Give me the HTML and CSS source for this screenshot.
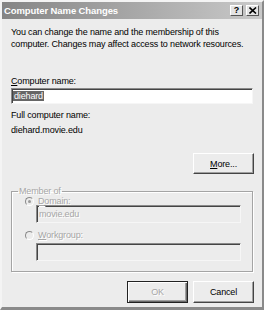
FILE: index.html
```html
<!DOCTYPE html>
<html lang="en">
<head>
  <meta charset="UTF-8" />
  <title>Computer Name Changes</title>
  <link rel="stylesheet" href="styles.css">
</head>
<body>
  <div class="dialog">
    <div class="titlebar">
      <span class="title">Computer Name Changes</span>
      <div class="caption-btns">
        <span class="cbtn help">?</span>
        <span class="cbtn close">
          <svg width="8" height="7" viewBox="0 0 8 7"><path d="M0.5 0.5 L7 6.5 M7 0.5 L0.5 6.5" stroke="#000" stroke-width="1.6" fill="none"/></svg>
        </span>
      </div>
    </div>

    <div class="content">
      <p class="intro">You can change the name and the membership of this<br>computer. Changes may affect access to network resources.</p>

      <div class="label name-label"><u>C</u>omputer name:</div>
      <div class="textbox"><span class="sel">diehard</span></div>

      <div class="label full-label">Full computer name:</div>
      <div class="label full-value">diehard.movie.edu</div>

      <div class="more-row">
        <button class="btn"><u>M</u>ore...</button>
      </div>

      <fieldset class="group">
        <legend class="off">Member of</legend>
        <div class="radio-row first">
          <span class="radio checked"></span>
          <span class="off"><u>D</u>omain:</span>
        </div>
        <div class="textbox disabled"><span class="off">movie.edu</span></div>
        <div class="radio-row second">
          <span class="radio"></span>
          <span class="off"><u>W</u>orkgroup:</span>
        </div>
        <div class="textbox disabled"></div>
      </fieldset>

      <div class="actions">
        <button class="btn default"><span class="off">OK</span></button>
        <button class="btn">Cancel</button>
      </div>
    </div>
  </div>
</body>
</html>
```

FILE: styles.css
```css
html, body {
  margin: 0;
  padding: 0;
  background-color: #ececec;
  font-family: 'Liberation Sans', Arial, sans-serif;
  font-size: 9px;
  letter-spacing: -0.15px;
  color: #000;
}

.dialog {
  width: 264px;
  height: 310px;
  box-sizing: border-box;
  border-top: 2px solid #f4f4f4;
  border-left: 2px solid #f4f4f4;
  border-right: 2px solid #8a8a8a;
  border-bottom: 3px solid #8a8a8a;
  background-color: #ececec;
}

.titlebar {
  height: 17px;
  display: flex;
  align-items: center;
  justify-content: space-between;
  padding: 0 3px 0 2px;
  background: linear-gradient(to right, #858585, #c9c9c9);
}

.title {
  color: #fff;
  font-weight: bold;
  font-size: 9.5px;
  letter-spacing: -0.1px;
}

.caption-btns {
  display: flex;
  gap: 3px;
}

.cbtn {
  width: 13px;
  height: 11px;
  box-sizing: border-box;
  display: flex;
  align-items: center;
  justify-content: center;
  background-color: #e4e4e4;
  border-top: 1px solid #fff;
  border-left: 1px solid #fff;
  border-right: 1px solid #555;
  border-bottom: 1px solid #555;
  font-weight: bold;
  font-size: 9px;
  line-height: 9px;
}

.content {
  padding: 7px 9px 0 9px;
}

.intro {
  margin: 0;
  line-height: 12px;
  white-space: nowrap;
}

.label {
  line-height: 12px;
}

.name-label {
  margin-top: 25px;
}

.textbox {
  height: 16px;
  box-sizing: border-box;
  margin-top: 1px;
  padding: 2px 1px;
  background-color: #fff;
  border-top: 1px solid #8a8a8a;
  border-left: 1px solid #8a8a8a;
  border-right: 1px solid #f6f6f6;
  border-bottom: 1px solid #f6f6f6;
  box-shadow: inset 1px 1px 0 #444;
  line-height: 10px;
}

.sel {
  display: inline-block;
  background-color: #666;
  color: #fff;
  padding: 0 1px;
  line-height: 10px;
}

.full-label {
  margin-top: 5px;
}

.full-value {
  margin-top: 3px;
}

.more-row {
  display: flex;
  justify-content: flex-end;
  margin-top: 17px;
  margin-right: -1px;
}

.btn {
  width: 61px;
  height: 21px;
  padding: 0;
  font-family: inherit;
  font-size: 9px;
  letter-spacing: -0.15px;
  color: #000;
  background-color: #ececec;
  border-top: 1px solid #fff;
  border-left: 1px solid #fff;
  border-right: 1px solid #444;
  border-bottom: 1px solid #444;
  box-shadow: inset -1px -1px 0 #a0a0a0;
}

.btn.default {
  border: 1px solid #222;
  box-shadow: inset 1px 1px 0 #fff, inset -1px -1px 0 #6a6a6a, inset -2px -2px 0 #a0a0a0;
}

.off {
  color: #a6a6a6;
  text-shadow: 1px 1px 0 #fff;
}

.group {
  margin: 13px 0 0 0;
  padding: 0 11px 10px 6px;
  border: 1px solid #a4a4a4;
  box-shadow: inset 1px 1px 0 #fff, 1px 1px 0 #fff;
}

.group legend {
  padding: 0 1px;
  margin-left: 0;
  line-height: 8px;
}

.radio-row {
  display: flex;
  align-items: center;
  gap: 4px;
  padding-left: 7px;
  height: 9px;
  line-height: 9px;
}

.radio-row.first {
  margin-top: 2px;
}

.radio-row.second {
  margin-top: 8px;
}

.radio {
  width: 9px;
  height: 9px;
  box-sizing: border-box;
  border-radius: 50%;
  border: 1px solid;
  border-color: #8a8a8a #fff #fff #8a8a8a;
  background-color: #ececec;
  display: flex;
  align-items: center;
  justify-content: center;
}

.radio.checked::after {
  content: "";
  width: 3px;
  height: 3px;
  border-radius: 50%;
  background-color: #9a9a9a;
}

.textbox.disabled {
  height: 18px;
  margin: -1px 0 0 18px;
  background-color: #ececec;
  padding: 3px 2px;
}

.radio-row.second + .textbox.disabled {
  margin-top: 3px;
}

.actions {
  display: flex;
  justify-content: flex-end;
  gap: 5px;
  margin-top: 9px;
  margin-right: -1px;
}

.actions .btn {
  height: 22px;
}
```
